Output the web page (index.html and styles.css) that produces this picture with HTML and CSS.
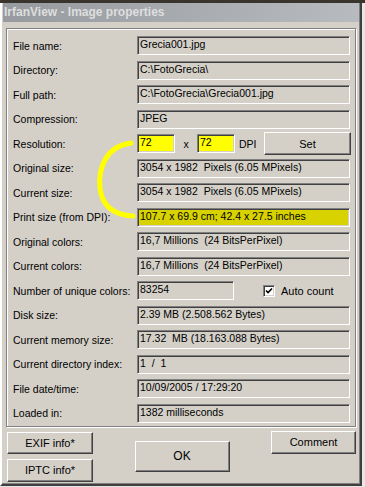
FILE: index.html
```html
<!DOCTYPE html>
<html lang="en">
<head>
    <meta charset="UTF-8">
    <meta name="viewport" content="width=device-width, initial-scale=1.0">
    <title>IrfanView - Image properties</title>
    <link rel="stylesheet" href="styles.css">
</head>
<body>
    <div class="window">
        <div class="titlebar">IrfanView - Image properties</div>

        <div class="group">
            <div class="row"><span class="label">File name:</span><span class="field">Grecia001.jpg</span></div>
            <div class="row"><span class="label">Directory:</span><span class="field">C:\FotoGrecia\</span></div>
            <div class="row"><span class="label">Full path:</span><span class="field">C:\FotoGrecia\Grecia001.jpg</span></div>
            <div class="row"><span class="label">Compression:</span><span class="field">JPEG</span></div>
            <div class="row">
                <span class="label">Resolution:</span>
                <div class="res">
                    <span class="field field-dpi">72</span>
                    <span class="times">x</span>
                    <span class="field field-dpi">72</span>
                    <span class="dpi">DPI</span>
                    <button class="btn btn-set">Set</button>
                </div>
            </div>
            <div class="row"><span class="label">Original size:</span><span class="field">3054 x 1982&nbsp; Pixels (6.05 MPixels)</span></div>
            <div class="row"><span class="label">Current size:</span><span class="field">3054 x 1982&nbsp; Pixels (6.05 MPixels)</span></div>
            <div class="row"><span class="label">Print size (from DPI):</span><span class="field field-print">107.7 x 69.9 cm; 42.4 x 27.5 inches</span></div>
            <div class="row"><span class="label">Original colors:</span><span class="field">16,7 Millions&nbsp; (24 BitsPerPixel)</span></div>
            <div class="row"><span class="label">Current colors:</span><span class="field">16,7 Millions&nbsp; (24 BitsPerPixel)</span></div>
            <div class="row">
                <span class="label">Number of unique colors:</span>
                <span class="field field-count">83254</span>
                <label class="check">
                    <span class="box">
                        <svg width="8" height="8" viewBox="0 0 8 8"><path d="M1 3.5 L3 5.5 L7 1.5" fill="none" stroke="#000" stroke-width="1.6"/></svg>
                    </span>
                    Auto count
                </label>
            </div>
            <div class="row"><span class="label">Disk size:</span><span class="field">2.39 MB (2.508.562 Bytes)</span></div>
            <div class="row"><span class="label">Current memory size:</span><span class="field">17.32&nbsp; MB (18.163.088 Bytes)</span></div>
            <div class="row"><span class="label">Current directory index:</span><span class="field">1&nbsp; /&nbsp; 1</span></div>
            <div class="row"><span class="label">File date/time:</span><span class="field">10/09/2005 / 17:29:20</span></div>
            <div class="row"><span class="label">Loaded in:</span><span class="field">1382 milliseconds</span></div>
        </div>

        <div class="footer">
            <div class="info-btns">
                <button class="btn btn-info">EXIF info*</button>
                <button class="btn btn-info btn-iptc">IPTC info*</button>
            </div>
            <button class="btn btn-ok">OK</button>
            <button class="btn btn-comment">Comment</button>
        </div>
    </div>

    <!-- yellow marker drawn over the dialog -->
    <svg class="marker" width="365" height="487" viewBox="0 0 365 487">
        <path d="M131 143 C106 146 98 168 100 188 C102 206 114 215 133 216" fill="none" stroke="#ffff00" stroke-width="5" stroke-linecap="round"/>
    </svg>
</body>
</html>
```

FILE: styles.css
```css
body {
    margin: 0;
    width: 365px;
    height: 487px;
    position: relative;
    overflow: hidden;
    font-family: 'Liberation Sans', Arial, sans-serif;
    font-size: 10.5px;
    color: #000;
    background: linear-gradient(#3a342e 0, #3a342e 3px, #e6e6e6 3px);
}
.window {
    width: 356px;
    margin-top: 3px;
    padding: 0 1px 1px 1px;
    background-color: #d4d0c8;
    border-left: 2px solid #ffffff;
    border-right: 2px solid #404040;
    border-bottom: 2px solid #404040;
    box-shadow: inset -1px -1px 0 #808080;
}
.titlebar {
    height: 19px;
    line-height: 19px;
    padding-left: 1px;
    font-weight: bold;
    font-size: 12px;
    color: #dedede;
    background: linear-gradient(to right, #979b9f, #b7bbbf);
}
.group {
    margin: 6px 3px 0 3px;
    padding: 7px 5px 3px 6px;
    display: flex;
    flex-direction: column;
    gap: 5.5px;
    border: 1px solid #808080;
    box-shadow: inset 1px 1px 0 #ffffff, 1px 1px 0 #ffffff;
}
.row {
    display: flex;
    align-items: center;
    height: 19px;
}
.label {
    width: 124px;
    flex-shrink: 0;
    white-space: nowrap;
}
.field {
    flex: 1;
    box-sizing: border-box;
    height: 19px;
    line-height: 15px;
    padding: 0 2px;
    white-space: nowrap;
    border: 1px solid;
    border-color: #808080 #ffffff #ffffff #808080;
    box-shadow: inset 1px 1px 0 #404040, inset -1px -1px 0 #d4d0c8;
}
.field-print {
    background-color: #d8d300;
}
.res {
    flex: 1;
    display: flex;
    align-items: center;
}
.field-dpi {
    flex: none;
    width: 38px;
    background-color: #ffff00;
}
.times {
    width: 22px;
    text-align: center;
}
.dpi {
    margin-left: 4px;
}
.field-count {
    flex: none;
    width: 97px;
}
.check {
    display: flex;
    align-items: center;
    gap: 6px;
    margin-left: 29px;
    font-size: 11px;
}
.box {
    width: 12px;
    height: 12px;
    box-sizing: border-box;
    display: flex;
    align-items: center;
    justify-content: center;
    background-color: #ffffff;
    border: 1px solid;
    border-color: #808080 #ffffff #ffffff #808080;
    box-shadow: inset 1px 1px 0 #404040, inset -1px -1px 0 #d4d0c8;
}
.btn {
    box-sizing: border-box;
    padding: 0;
    font-family: inherit;
    font-size: 11px;
    color: #000;
    background-color: #d4d0c8;
    border: 1px solid;
    border-color: #ffffff #404040 #404040 #ffffff;
    box-shadow: inset -1px -1px 0 #808080;
}
.btn-set {
    width: 87px;
    height: 23px;
    margin-left: auto;
    margin-right: -1px;
}
.footer {
    display: flex;
    justify-content: space-between;
    align-items: flex-start;
    padding: 5px 3px 1px 4px;
}
.info-btns {
    display: flex;
    flex-direction: column;
    gap: 5px;
}
.btn-info {
    width: 86px;
    height: 22px;
}
.btn-iptc {
    height: 23px;
}
.btn-ok {
    width: 95px;
    height: 31px;
    margin-top: 9px;
    font-size: 12px;
}
.btn-comment {
    width: 85px;
    height: 23px;
    margin-top: -1px;
}
.marker {
    position: absolute;
    left: 0;
    top: 0;
    pointer-events: none;
}
```
